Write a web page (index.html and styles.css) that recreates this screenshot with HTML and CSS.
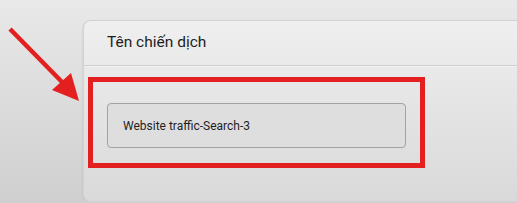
FILE: index.html
```html
<!DOCTYPE html>
<html lang="vi">
<head>
  <meta charset="UTF-8">
  <meta name="viewport" content="width=device-width, initial-scale=1.0">
  <title>Tên chiến dịch</title>
  <link rel="stylesheet" href="styles.css">
</head>
<body>

<div id="page">
  <svg class="arrow" width="90" height="110" viewBox="0 0 90 110">
    <line x1="10" y1="29" x2="62" y2="82" stroke="#e31f1f" stroke-width="4.5" stroke-linecap="butt"/>
    <polygon points="79,101 52,90 71,73" fill="#e31f1f"/>
  </svg>

  <div class="card">
    <div class="card-header">Tên chiến dịch</div>
    <div class="card-body">
      <div class="highlight">
        <div class="field">Website traffic-Search-3</div>
      </div>
    </div>
  </div>
</div>

</body>
</html>
```

FILE: styles.css
```css
* {
  box-sizing: border-box;
  margin: 0;
  padding: 0;
}

html, body {
  height: 203px;
  overflow: hidden;
}

body {
  background: linear-gradient(to bottom, #e9e9e9, #cfcfcf);
  font-family: 'Roboto', 'Liberation Sans', sans-serif;
  color: #1e1e1e;
}

#page {
  position: relative;
  padding: 20px 0 0 83px;
  overflow: hidden;
}

/* red annotation arrow */
.arrow {
  position: absolute;
  left: 0;
  top: 0;
}

.card {
  width: 460px;
  height: 182px;
  border: 1px solid #d3d3d3;
  border-radius: 8px;
  background: linear-gradient(to bottom, #efefef, #d9d9d9);
  box-shadow: -1px 0 2px rgba(0, 0, 0, 0.06);
}

.card-header {
  height: 45px;
  padding: 0 0 0 23px;
  font-size: 15.5px;
  line-height: 42px;
  border-bottom: 1px solid #d0d0d0;
  box-shadow: 0 1px 0 #f2f2f2;
}

.card-body {
  padding: 11px 0 0 4px;
}

.highlight {
  width: 337px;
  height: 91px;
  border: 5px solid #e31f1f;
  padding: 21px 0 0 14px;
}

.field {
  width: 299px;
  height: 45px;
  border: 1px solid #a2a2a2;
  border-radius: 4px;
  padding: 0 0 0 15px;
  font-size: 12px;
  line-height: 44px;
  background: #dedede;
}
```
